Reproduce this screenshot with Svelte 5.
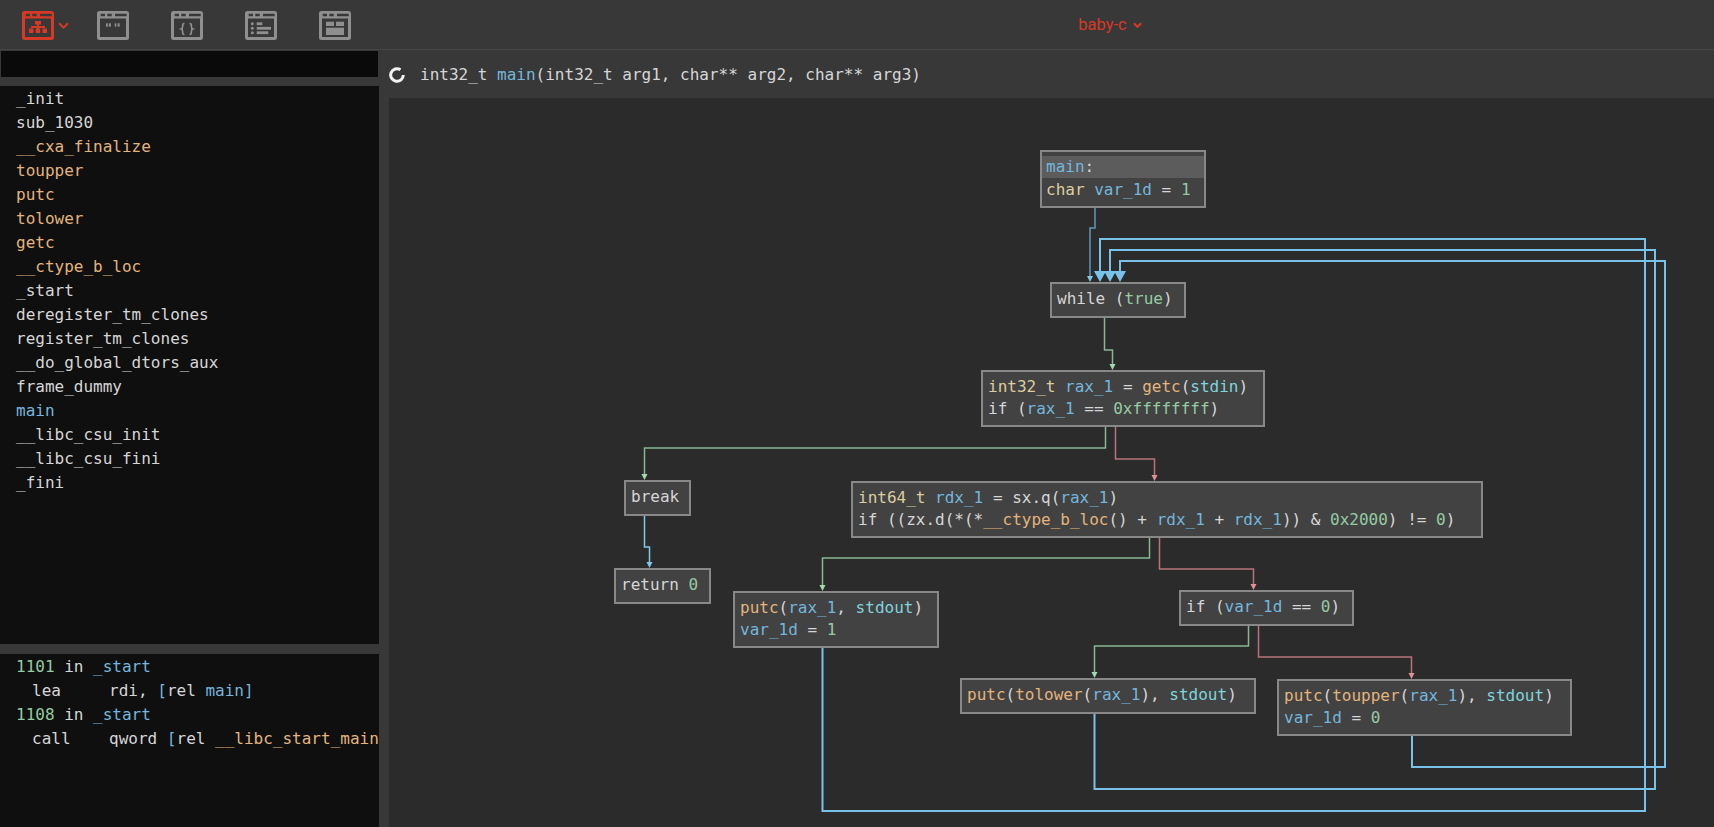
<script>
  const funcs = [
    ['_init', ''], ['sub_1030', ''], ['__cxa_finalize', 'f'], ['toupper', 'f'], ['putc', 'f'], ['tolower', 'f'], ['getc', 'f'], ['__ctype_b_loc', 'f'], ['_start', ''], ['deregister_tm_clones', ''], ['register_tm_clones', ''], ['__do_global_dtors_aux', ''], ['frame_dummy', ''], ['main', 'v'], ['__libc_csu_init', ''], ['__libc_csu_fini', ''], ['_fini', '']
  ];
  const t = (s, c = '') => ({ s, c });
  const refs = [
    [[t('1101', 'n'), t(' in '), t('_start', 'v')]],
    [[t('lea     rdi, '), t('[', 'v'), t('rel '), t('main', 'v'), t(']', 'v')], 'ins'],
    [[t('1108', 'n'), t(' in '), t('_start', 'v')]],
    [[t('call    qword '), t('[', 'v'), t('rel '), t('__libc_start_main', 'f'), t(']', 'v')], 'ins']
  ];
  const nodes = [
    { x: 1040, y: 150, w: 166, h: 58, cls: 'entry', lines: [[t('main', 'v'), t(':')], [t('char', 'ty'), t(' '), t('var_1d', 'v'), t(' = '), t('1', 'n')]] },
    { x: 1050, y: 282, w: 136, h: 36, lines: [[t('while ('), t('true', 'n'), t(')')]] },
    { x: 981, y: 370, w: 284, h: 57, lines: [[t('int32_t', 'ty'), t(' '), t('rax_1', 'v'), t(' = '), t('getc', 'f'), t('('), t('stdin', 'd'), t(')')], [t('if ('), t('rax_1', 'v'), t(' == '), t('0xffffffff', 'n'), t(')')]] },
    { x: 624, y: 480, w: 67, h: 36, lines: [[t('break')]] },
    { x: 614, y: 568, w: 97, h: 36, lines: [[t('return '), t('0', 'n')]] },
    { x: 851, y: 481, w: 632, h: 57, lines: [[t('int64_t', 'ty'), t(' '), t('rdx_1', 'v'), t(' = sx.q('), t('rax_1', 'v'), t(')')], [t('if ((zx.d(*(*'), t('__ctype_b_loc', 'f'), t('() + '), t('rdx_1', 'v'), t(' + '), t('rdx_1', 'v'), t(')) & '), t('0x2000', 'n'), t(') != '), t('0', 'n'), t(')')]] },
    { x: 733, y: 591, w: 206, h: 57, lines: [[t('putc', 'f'), t('('), t('rax_1', 'v'), t(', '), t('stdout', 'd'), t(')')], [t('var_1d', 'v'), t(' = '), t('1', 'n')]] },
    { x: 1179, y: 590, w: 175, h: 36, lines: [[t('if ('), t('var_1d', 'v'), t(' == '), t('0', 'n'), t(')')]] },
    { x: 960, y: 678, w: 296, h: 36, lines: [[t('putc', 'f'), t('('), t('tolower', 'f'), t('('), t('rax_1', 'v'), t('), '), t('stdout', 'd'), t(')')]] },
    { x: 1277, y: 679, w: 295, h: 57, lines: [[t('putc', 'f'), t('('), t('toupper', 'f'), t('('), t('rax_1', 'v'), t('), '), t('stdout', 'd'), t(')')], [t('var_1d', 'v'), t(' = '), t('0', 'n')]] }
  ];
  const edges = [
    { c: 'u dim', d: 'M1095 208V228H1090V277', ax: 1090, ay: 282 },
    { c: 'g', d: 'M1104.5 318V350H1112.5V365', ax: 1112.5, ay: 370 },
    { c: 'g', d: 'M1105.5 427V448H644.5V475', ax: 644.5, ay: 480 },
    { c: 'r', d: 'M1115.5 427V459H1154.5V476', ax: 1154.5, ay: 481 },
    { c: 'u', d: 'M644.5 516V547H649.5V563', ax: 649.5, ay: 568 },
    { c: 'g', d: 'M1149.5 538V558H822.5V586', ax: 822.5, ay: 591 },
    { c: 'r', d: 'M1159.5 538V569H1253.5V585', ax: 1253.5, ay: 590 },
    { c: 'g', d: 'M1248.5 626V646H1094.5V673', ax: 1094.5, ay: 678 },
    { c: 'r', d: 'M1258.5 626V657H1411.5V674', ax: 1411.5, ay: 679 }
  ];
  const backEdges = [
    { d: 'M822.5 648V811H1645V239H1100V272', ax: 1100 },
    { d: 'M1094.5 714V789H1655V250H1110V272', ax: 1110 },
    { d: 'M1412 736V767H1665V261H1120V272', ax: 1120 }
  ];
  const grayIcons = ['quotes', 'braces', 'list', 'panes'];
</script>

<div class="app">
  <header class="topbar">
    <div class="tabs">
      <button class="tab active" aria-label="Graph view">
        {@render frame('tree')}
        <svg class="chev" viewBox="0 0 10 6"><path d="M1 1l4 4 4-4" /></svg>
      </button>
      {#each grayIcons as name}
        <button class="tab" aria-label={name}>{@render frame(name)}</button>
      {/each}
    </div>
    <div class="title">
      <span>baby-c</span>
      <svg class="chev small" viewBox="0 0 10 6"><path d="M1 1l4 4 4-4" /></svg>
    </div>
  </header>

  <div class="body">
    <aside class="side">
      <div class="search"></div>
      <ul class="funcs">
        {#each funcs as [name, c]}
          <li class={c}>{name}</li>
        {/each}
      </ul>
      <div class="xrefs">
        {#each refs as [parts, cls]}
          <div class="xref {cls ?? ''}">{#each parts as p}<span class={p.c}>{p.s}</span>{/each}</div>
        {/each}
      </div>
    </aside>

    <main class="view">
      <div class="sig">
        <svg class="spinner" viewBox="0 0 16 16"><path d="M11.5 2.800A6.300 6.300 0 1 0 14.300 8" /></svg>
        <code>int32_t <span class="v">main</span>(int32_t arg1, char** arg2, char** arg3)</code>
      </div>
      <div class="canvas">
        <svg class="wires" viewBox="389 98 1325 729">
          {#each edges as e}
            <path class="edge {e.c}" d={e.d} />
            <polygon class="head {e.c}" points="{e.ax - 3},{e.ay - 6} {e.ax + 3},{e.ay - 6} {e.ax},{e.ay}" />
          {/each}
          {#each backEdges as e}
            <path class="back" d={e.d} />
          {/each}
          {#each backEdges as e}
            <polygon class="bighead" points="{e.ax - 6},271 {e.ax + 6},271 {e.ax},282" />
          {/each}
        </svg>
        {#each nodes as n}
          <div class="node {n.cls ?? ''}" style="left:{n.x - 389}px;top:{n.y - 98}px;width:{n.w}px;height:{n.h}px">
            {#each n.lines as line, i}
              <div class="line" class:hl={n.cls === 'entry' && i === 0}>{#each line as p}<span class={p.c}>{p.s}</span>{/each}</div>
            {/each}
          </div>
        {/each}
      </div>
    </main>
  </div>
</div>

{#snippet frame(kind)}
  <svg class="frame" viewBox="0 0 32 29">
    <path fill-rule="evenodd" d="M2.5 0h27A2.5 2.5 0 0 1 32 2.5v24a2.5 2.5 0 0 1-2.5 2.5h-27A2.5 2.5 0 0 1 0 26.500v-24A2.500 2.500 0 0 1 2.500 0zM3 7.500V26h26V7.500zM3.700 2.700v2.600h4.300V2.700zM10.300 2.700v2.600h4.400V2.700zM18 2.700v2.600h11.700V2.700z" />
    {#if kind === 'tree'}
      <rect x="13" y="10" width="6" height="3.500" />
      <rect x="15" y="13" width="2" height="5" />
      <rect x="9" y="15" width="14" height="2" />
      <rect x="7" y="17.500" width="4.500" height="4.500" />
      <rect x="13.700" y="17.500" width="4.500" height="4.500" />
      <rect x="20.500" y="17.500" width="4.500" height="4.500" />
    {:else if kind === 'quotes'}
      <rect x="9" y="12.300" width="1.800" height="3.400" />
      <rect x="11.800" y="12.300" width="2" height="3.400" />
      <rect x="17.700" y="12.300" width="1.600" height="3.400" />
      <rect x="20.600" y="12.300" width="2" height="3.400" />
    {:else if kind === 'braces'}
      <path class="brace" d="M13.500 12.500c-2 0-1.800 1-1.800 2.500s0 2.500-1.500 3c1.500.5 1.500 1.500 1.500 3s-.2 2.500 1.800 2.500M18.500 12.500c2 0 1.800 1 1.800 2.500s0 2.500 1.500 3c-1.500.5-1.500 1.500-1.500 3s.2 2.500-1.800 2.500" />
    {:else if kind === 'list'}
      <circle cx="7.300" cy="12.700" r="1.500" />
      <circle cx="7.300" cy="17.300" r="1.500" />
      <circle cx="7.300" cy="21.700" r="1.500" />
      <rect x="11.700" y="11.300" width="5.700" height="2.800" />
      <rect x="11.700" y="15.900" width="14.300" height="2.800" />
      <rect x="11.700" y="20.300" width="11.600" height="2.800" />
    {:else}
      <rect x="7" y="10.700" width="8" height="4.300" />
      <rect x="17" y="10.700" width="8" height="4.300" />
      <rect x="7" y="16.700" width="18" height="7.300" />
    {/if}
  </svg>
{/snippet}

<style>
  :global(body) { margin: 0; background: #383838; }
  .app {
    width: 1714px;
    height: 827px;
    overflow: hidden;
    display: flex;
    flex-direction: column;
    background: #383838;
    color: #d6d6d6;
    font: 16px/24px "DejaVu Sans Mono", monospace;
  }
  .topbar {
    height: 49px;
    display: flex;
    align-items: center;
    border-bottom: 1px solid #464646;
    flex: none;
  }
  .tabs {
    width: 506px;
    box-sizing: border-box;
    display: flex;
    align-items: center;
    padding-left: 22px;
    flex: none;
  }
  .tab {
    all: unset;
    display: flex;
    align-items: center;
    width: 32px;
    margin-right: 42px;
    color: #8f8f8f;
    padding-top: 1px;
  }
  .tab.active { color: #d63a26; margin-right: 43px; }
  .frame { width: 32px; height: 29px; flex: none; fill: currentColor; }
  .brace { fill: none; stroke: currentColor; stroke-width: 1.700; }
  .chev {
    width: 11px;
    height: 7px;
    margin-left: 4px;
    flex: none;
    fill: none;
    stroke: currentColor;
    stroke-width: 1.800;
  }
  .chev.small { width: 9px; height: 6px; margin-left: 6px; stroke-width: 2.400; }
  .title {
    flex: 1;
    display: flex;
    justify-content: center;
    align-items: center;
    color: #d63a26;
    font: 16.500px/24px Roboto, sans-serif;
  }
  .body { flex: 1; min-height: 0; display: flex; gap: 10px; }
  .side { width: 379px; flex: none; display: flex; flex-direction: column; min-height: 0; }
  .search { height: 26px; margin: 1px 1px 9px 1px; background: #0a0a0a; flex: none; }
  .funcs {
    height: 558px;
    box-sizing: border-box;
    margin: 0;
    padding: 1px 0 0 16px;
    list-style: none;
    background: #0f0f0f;
    flex: none;
  }
  .xrefs {
    margin-top: 10px;
    flex: 1;
    background: #0f0f0f;
    padding: 1px 0 0 16px;
    overflow: hidden;
    white-space: pre;
  }
  .xref.ins { padding-left: 16px; }
  .v { color: #74b6dc; }
  .f { color: #e3b47c; }
  .n { color: #95cba2; }
  .ty { color: #dccd9f; }
  .d { color: #80d4dc; }
  .view { flex: 1; min-width: 0; display: flex; flex-direction: column; }
  .sig {
    height: 48px;
    flex: none;
    display: flex;
    align-items: center;
    gap: 15px;
    padding-top: 2px;
    box-sizing: border-box;
  }
  .sig code { font: inherit; }
  .spinner { width: 16px; height: 16px; fill: none; stroke: #f2f2f2; stroke-width: 3; flex: none; }
  .canvas { position: relative; flex: 1; background: #2b2b2b; overflow: hidden; }
  .wires { position: absolute; inset: 0; width: 1325px; height: 729px; }
  .edge { fill: none; stroke-width: 1.500; }
  .edge.g { stroke: #86b892; }
  .edge.r { stroke: #b8747c; }
  .edge.u { stroke: #80c6e9; }
  .edge.dim { stroke: #5f9bbb; }
  .head.g { fill: #a2d9af; }
  .head.r { fill: #de8f97; }
  .head.u { fill: #80c6e9; }
  .back { fill: none; stroke: #78c1e8; stroke-width: 2; }
  .bighead { fill: #78c1e8; }
  .node {
    position: absolute;
    box-sizing: border-box;
    border: 2px solid #888;
    background: #424242;
    padding: 4px 5px 0;
    line-height: 22px;
    white-space: pre;
  }
  .node.entry { padding: 4px 0 0; }
  .entry .line { padding: 0 4px; }
  .entry .line.hl { background: #5c5c5c; margin-bottom: 1px; }
</style>
